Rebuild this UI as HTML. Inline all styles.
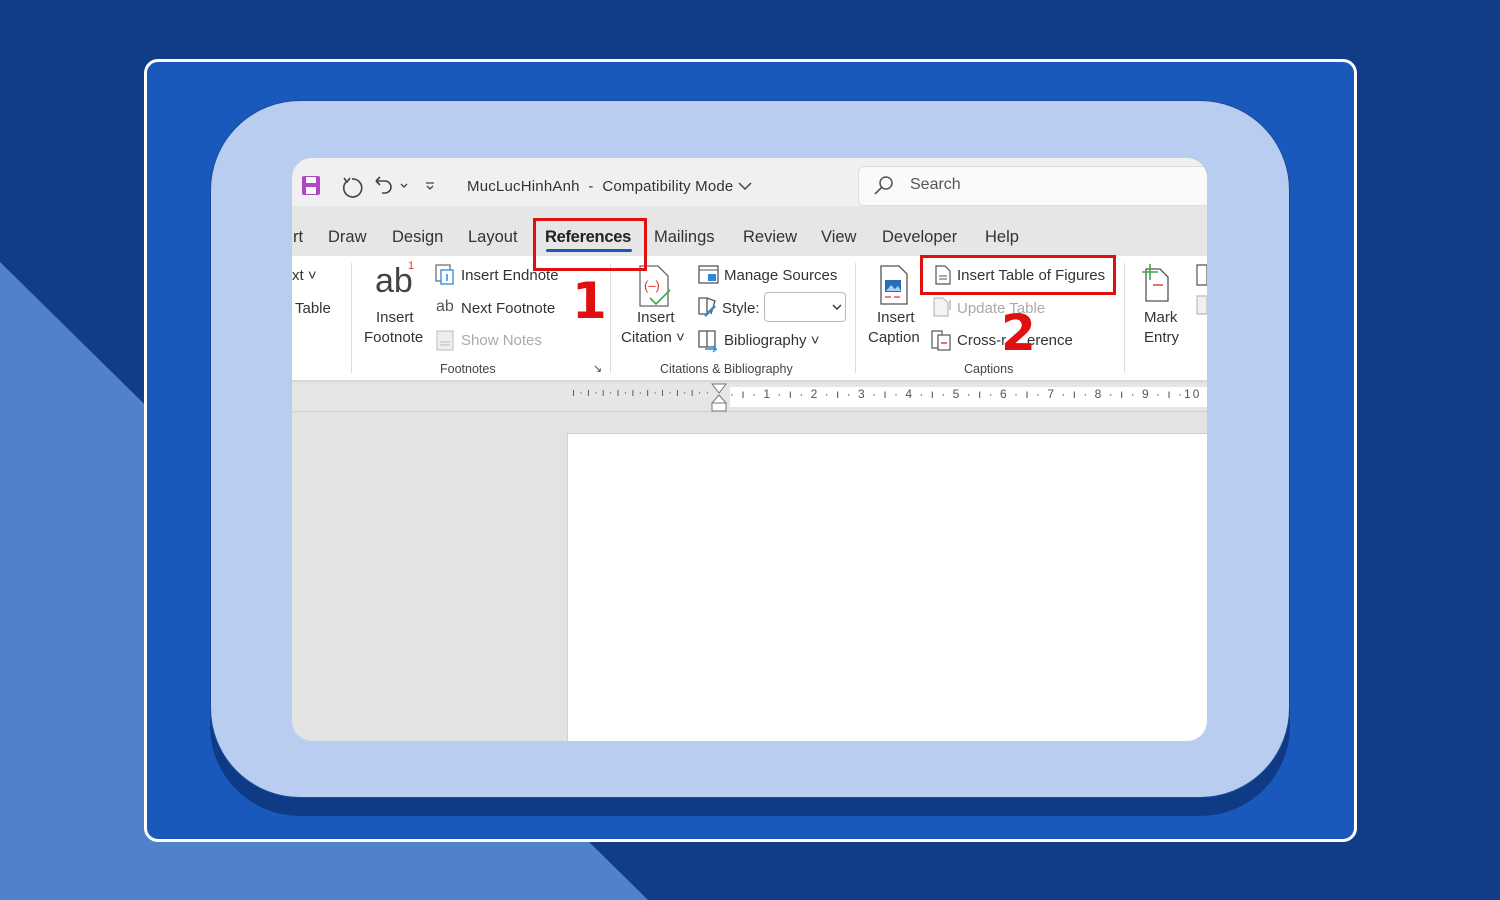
<!DOCTYPE html>
<html><head><meta charset="utf-8"><style>
*{margin:0;padding:0;box-sizing:border-box}
body{width:1500px;height:900px;overflow:hidden;background:#113c88;position:relative;font-family:"Liberation Sans",sans-serif}
.a{position:absolute}
.t{position:absolute;font-size:15px;color:#333;white-space:nowrap}
.g{color:#aaa}
.s{font-size:12.5px;color:#444}
</style></head><body>
<svg class="a" style="left:0;top:0" width="1500" height="900"><polygon points="0,262 648,900 0,900" fill="#5181ca"/></svg>
<div class="a" style="left:144px;top:59px;width:1213px;height:783px;border:3px solid #fff;border-radius:14px;background:#1959bb"></div>
<div class="a" style="left:210px;top:118px;width:1080px;height:698px;border-radius:90px;background:#0f3b86"></div>
<div class="a" style="left:210px;top:100px;width:1080px;height:698px;border-radius:90px;background:#b8cdef;border:1px solid #1a4a9a"></div>
<div class="a" style="left:292px;top:158px;width:915px;height:583px;border-radius:20px;overflow:hidden;background:#e3e3e3">
 <div class="a" style="left:0;top:0;width:915px;height:48px;background:#f0f0f0"></div>
 <div class="a" style="left:0;top:48px;width:915px;height:50px;background:#e6e6e6"></div>
 <div class="a" style="left:0;top:98px;width:915px;height:126px;background:#fff;border-bottom:2px solid #d8d8d8"></div>
 <div class="a" style="left:0;top:226px;width:915px;height:28px;background:#e6e6e6;border-bottom:1px solid #d0d0d0"></div>
 <div class="a" style="left:438px;top:229px;width:477px;height:20px;background:#fff"></div>
 <div class="a" style="left:275px;top:275px;width:640px;height:320px;background:#fff;border-left:1px solid #d0d0d0;border-top:1px solid #d0d0d0"></div>
 <div class="a" style="left:566px;top:8px;width:360px;height:40px;background:#fafafa;border:1px solid #ddd;border-radius:6px"></div>
</div>
<!-- title bar -->
<svg class="a" style="left:300px;top:173px" width="145" height="26">
 <rect x="2" y="3" width="18" height="19" rx="2" fill="#b146c2"/><rect x="6" y="4" width="10" height="6" fill="#fff"/><rect x="6" y="14" width="10" height="7" fill="#fff"/>
 <path d="M52 6a9 9 0 1 1-6 3" fill="none" stroke="#444" stroke-width="1.6"/><path d="M44 5l3 4 3-4" fill="none" stroke="#444" stroke-width="1.6"/>
 <path d="M76 8h9a6 6 0 0 1 0 12h-3M76 8l4-4M76 8l4 4" fill="none" stroke="#444" stroke-width="1.6"/>
 <path d="M101 11l3 3 3-3" fill="none" stroke="#444" stroke-width="1.3"/>
 <path d="M126 10h8M127 13l3 3 3-3" fill="none" stroke="#444" stroke-width="1.3"/>
</svg>
<div class="t" style="left:467px;top:178px;letter-spacing:0.2px">MucLucHinhAnh &nbsp;- &nbsp;Compatibility Mode</div>
<svg class="a" style="left:738px;top:181px" width="14" height="10"><path d="M1 2l6 6 6-6" fill="none" stroke="#444" stroke-width="1.5"/></svg>
<svg class="a" style="left:873px;top:175px" width="22" height="22"><circle cx="13" cy="8" r="6" fill="none" stroke="#555" stroke-width="1.5"/><path d="M9 12l-7 7" stroke="#555" stroke-width="1.6"/></svg>
<div class="t" style="left:910px;top:176px;font-size:16px;color:#555">Search</div>
<!-- tabs -->
<div class="t" style="left:293px;top:228px;font-size:16.5px">rt</div>
<div class="t" style="left:328px;top:228px;font-size:16.5px">Draw</div>
<div class="t" style="left:392px;top:228px;font-size:16.5px">Design</div>
<div class="t" style="left:468px;top:228px;font-size:16.5px">Layout</div>
<div class="t" style="left:545px;top:228px;font-size:16.5px;color:#222;font-weight:bold;letter-spacing:-0.3px">References</div>
<div class="a" style="left:546px;top:249px;width:86px;height:3px;background:#1a57b8;border-radius:2px"></div>
<div class="t" style="left:654px;top:228px;font-size:16.5px">Mailings</div>
<div class="t" style="left:743px;top:228px;font-size:16.5px">Review</div>
<div class="t" style="left:821px;top:228px;font-size:16.5px">View</div>
<div class="t" style="left:882px;top:228px;font-size:16.5px">Developer</div>
<div class="t" style="left:985px;top:228px;font-size:16.5px">Help</div>
<!-- ribbon -->
<div class="t" style="left:292px;top:267px">xt ˅</div>
<div class="t" style="left:295px;top:300px">Table</div>
<div class="a" style="left:351px;top:263px;width:1px;height:110px;background:#ddd"></div>
<div class="t" style="left:375px;top:262px;font-size:34px;color:#444">ab</div><div class="t" style="left:408px;top:260px;font-size:11px;color:#d33">1</div>
<div class="t" style="left:376px;top:309px">Insert</div>
<div class="t" style="left:364px;top:329px">Footnote</div>
<svg class="a" style="left:435px;top:264px" width="22" height="22"><rect x="1" y="1" width="14" height="16" fill="none" stroke="#666" stroke-width="1.2"/><rect x="6" y="6" width="12" height="14" fill="#fff" stroke="#2b88d8" stroke-width="1.3"/><path d="M12 10v7" stroke="#2b88d8" stroke-width="1.5"/></svg>
<div class="t" style="left:461px;top:267px">Insert Endnote</div>
<div class="t" style="left:436px;top:298px;font-size:16px;color:#555">ab</div>
<div class="t" style="left:461px;top:300px">Next Footnote</div>
<svg class="a" style="left:436px;top:330px" width="20" height="22"><rect x="1" y="1" width="16" height="19" fill="#eee" stroke="#bbb"/><path d="M4 12h10M4 15h10" stroke="#bbb"/></svg>
<div class="t g" style="left:461px;top:332px">Show Notes</div>
<div class="t s" style="left:440px;top:362px">Footnotes</div>
<div class="t s" style="left:593px;top:362px;font-size:11px">↘</div>
<div class="a" style="left:610px;top:263px;width:1px;height:110px;background:#ddd"></div>
<svg class="a" style="left:636px;top:264px" width="42" height="46"><path d="M4 2h18l10 10v30H4z" fill="#fff" stroke="#666" stroke-width="1.3"/><text x="8" y="26" font-size="13" fill="#d33" font-family="Liberation Sans">(–)</text><path d="M14 34l6 6 14-14" fill="none" stroke="#3aa84a" stroke-width="1.6"/></svg>
<div class="t" style="left:637px;top:309px">Insert</div>
<div class="t" style="left:621px;top:329px">Citation ˅</div>
<svg class="a" style="left:698px;top:265px" width="22" height="20"><rect x="1" y="1" width="19" height="17" fill="none" stroke="#555" stroke-width="1.3"/><path d="M1 5h19" stroke="#555"/><rect x="10" y="9" width="8" height="7" fill="#2b88d8"/></svg>
<div class="t" style="left:724px;top:267px">Manage Sources</div>
<svg class="a" style="left:697px;top:296px" width="22" height="22"><path d="M2 2h8v16H2zM10 2l8 3-4 13" fill="none" stroke="#555" stroke-width="1.3"/><path d="M8 20l10-10" stroke="#2b88d8" stroke-width="2.5"/></svg>
<div class="t" style="left:722px;top:300px">Style:</div>
<div class="a" style="left:764px;top:292px;width:82px;height:30px;border:1px solid #bbb;border-radius:4px;background:#fff"></div>
<svg class="a" style="left:832px;top:303px" width="10" height="8"><path d="M1 2l4 4 4-4" fill="none" stroke="#333" stroke-width="1.4"/></svg>
<svg class="a" style="left:697px;top:329px" width="24" height="24"><path d="M2 2h8v16H2zM10 2h8v16h-8" fill="none" stroke="#555" stroke-width="1.3"/><path d="M8 20h12M16 17l3 3-3 3" fill="none" stroke="#2b88d8" stroke-width="1.4"/></svg>
<div class="t" style="left:724px;top:332px">Bibliography ˅</div>
<div class="t s" style="left:660px;top:362px">Citations &amp; Bibliography</div>
<div class="a" style="left:855px;top:263px;width:1px;height:110px;background:#ddd"></div>
<svg class="a" style="left:878px;top:264px" width="32" height="44"><path d="M3 2h18l8 8v30H3z" fill="#fff" stroke="#555" stroke-width="1.3"/><rect x="7" y="16" width="16" height="12" fill="#2b6cb8"/><path d="M8 27l5-6 4 4 3-3 3 5" fill="#a8d0f0"/><path d="M7 33h6M16 33h6" stroke="#d33" stroke-width="1.3"/></svg>
<div class="t" style="left:877px;top:309px">Insert</div>
<div class="t" style="left:868px;top:329px">Caption</div>
<svg class="a" style="left:934px;top:265px" width="18" height="20"><path d="M2 1h9l5 5v13H2z" fill="#fff" stroke="#555" stroke-width="1.2"/><path d="M5 11h8M5 14h8" stroke="#555"/></svg>
<div class="t" style="left:957px;top:267px">Insert Table of Figures</div>
<svg class="a" style="left:932px;top:297px" width="20" height="20"><path d="M2 1h9l5 5v13H2z" fill="#f3f3f3" stroke="#bbb" stroke-width="1.2"/><path d="M18 3v10" stroke="#bbb" stroke-width="1.5"/></svg>
<div class="t g" style="left:957px;top:300px">Update Table</div>
<svg class="a" style="left:931px;top:330px" width="22" height="22"><rect x="1" y="1" width="10" height="17" fill="none" stroke="#555" stroke-width="1.2"/><rect x="7" y="5" width="12" height="15" fill="#fff" stroke="#555" stroke-width="1.2"/><path d="M10 13h6" stroke="#d33" stroke-width="1.4"/></svg>
<div class="t" style="left:957px;top:332px">Cross-r&nbsp;&nbsp;&nbsp;&nbsp;&nbsp;erence</div>
<div class="t s" style="left:964px;top:362px">Captions</div>
<div class="a" style="left:1124px;top:263px;width:1px;height:110px;background:#ddd"></div>
<svg class="a" style="left:1140px;top:263px" width="36" height="40"><path d="M6 6h14l8 8v24H6z" fill="#fff" stroke="#555" stroke-width="1.3"/><path d="M10 1v16M2 9h16" stroke="#3aa84a" stroke-width="1.6"/><path d="M13 22h10" stroke="#d33" stroke-width="1.4"/></svg>
<div class="t" style="left:1144px;top:309px">Mark</div>
<div class="t" style="left:1144px;top:329px">Entry</div>
<svg class="a" style="left:1195px;top:264px" width="12" height="52"><path d="M2 1h10v20H2z" fill="none" stroke="#555" stroke-width="1.2"/><path d="M2 32h10v18H2z" fill="#f0f0f0" stroke="#bbb" stroke-width="1.2"/></svg>
<!-- ruler -->
<div class="t" style="left:572px;top:387px;font-size:11px;color:#555;letter-spacing:0.5px">ı · ı · ı · ı · ı · ı · ı · ı · ı · ·</div>
<svg class="a" style="left:711px;top:383px" width="16" height="30"><path d="M1 1h14l-7 9z" fill="#fff" stroke="#777"/><path d="M8 12l-7 8h14z" fill="#fff" stroke="#777"/><rect x="1" y="20" width="14" height="8" fill="#fff" stroke="#777"/></svg>
<div class="t" style="left:730px;top:387px;font-size:12px;color:#555;letter-spacing:2px">· ı · 1 · ı · 2 · ı · 3 · ı · 4 · ı · 5 · ı · 6 · ı · 7 · ı · 8 · ı · 9 · ı ·10</div>
<!-- annotations -->
<div class="a" style="left:533px;top:218px;width:114px;height:53px;border:3px solid #e01010"></div>
<div class="a" style="left:920px;top:255px;width:196px;height:40px;border:3px solid #e01010"></div>
<div class="t" style="left:572px;top:276px;font-size:50px;font-weight:bold;color:#e01010;font-family:'DejaVu Sans',sans-serif;line-height:50px">1</div>
<div class="t" style="left:1001px;top:308px;font-size:50px;font-weight:bold;color:#e01010;font-family:'DejaVu Sans',sans-serif;line-height:50px">2</div>
</body></html>
